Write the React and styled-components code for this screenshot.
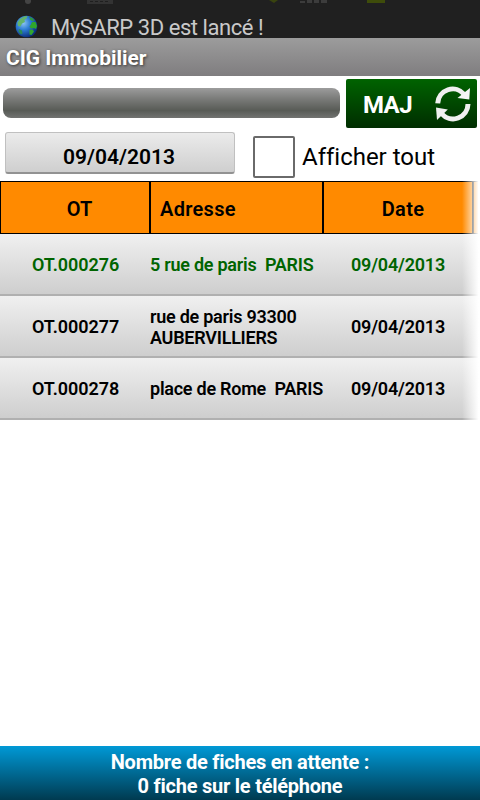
import styled, { createGlobalStyle } from 'styled-components';

const GlobalStyle = createGlobalStyle`
  * {
    box-sizing: border-box;
  }

  body {
    margin: 0;
    background: #fff;
    font-family: Roboto, 'Liberation Sans', sans-serif;
  }
`;

const Screen = styled.div`
  display: flex;
  flex-direction: column;
  width: 480px;
  height: 800px;
  overflow: hidden;
  background: #fff;
  color: #000;
`;

const StatusBar = styled.div`
  position: relative;
  display: flex;
  align-items: center;
  gap: 12px;
  flex: none;
  height: 38px;
  padding: 16px 0 0 15px;
  background: #202020;
  color: #c9c9c9;
  font-size: 22px;
  letter-spacing: -0.45px;
  line-height: 24px;
  white-space: nowrap;
`;

const StatusText = styled.span`
  padding-top: 2px;
`;

const OldIcons = styled.svg`
  position: absolute;
  top: 0;
  left: 0;
`;

const TitleBar = styled.div`
  flex: none;
  height: 38px;
  padding-left: 6px;
  background: linear-gradient(#9c9c9c, #7f7d7f);
  color: #fff;
  font-size: 21px;
  font-weight: 700;
  letter-spacing: -0.06px;
  line-height: 40px;
  text-shadow: 1px 1px 3px #333;
`;

const SyncRow = styled.div`
  display: flex;
  align-items: center;
  justify-content: space-between;
  flex: none;
  height: 55px;
  padding: 0 3px;
`;

const Progress = styled.div`
  width: 337px;
  height: 30px;
  margin-bottom: 1px;
  border-radius: 8px;
  background: linear-gradient(#9c9c9c, #7b7c7a 35%, #585b56 75%, #727371);
`;

const SyncButton = styled.button`
  display: flex;
  align-items: center;
  justify-content: space-between;
  width: 131px;
  height: 49px;
  padding: 0 6px 0 17px;
  border: none;
  border-radius: 2px;
  background: linear-gradient(#006300, #002d00);
  color: #fff;
  font-family: inherit;
  font-size: 24px;
  font-weight: 700;
  letter-spacing: -0.6px;
`;

const SyncText = styled.span`
  padding-top: 2px;
`;

const FilterRow = styled.div`
  display: flex;
  flex: none;
  height: 50px;
  padding: 1px 0 0 5px;
`;

const DateButton = styled.button`
  width: 230px;
  height: 42px;
  padding: 8px 2px 0 0;
  border: 1px solid #c0c0c0;
  border-bottom: 2px solid #929292;
  border-radius: 3px;
  background: linear-gradient(#ebebeb, #cfcfcf);
  color: #000;
  font-family: inherit;
  font-size: 21px;
  font-weight: 600;
`;

const CheckLabel = styled.label`
  display: flex;
  align-items: center;
  gap: 7px;
  height: 42px;
  margin: 4px 0 0 18px;
  font-size: 24px;
  letter-spacing: -0.01px;
`;

const CheckBox = styled.span`
  width: 42px;
  height: 42px;
  border: 2px solid #6a6a6a;
  border-radius: 2px;
  background: #fff;
`;

const Table = styled.div`
  position: relative;
  flex: 1;
`;

const EdgeFade = styled.div`
  position: absolute;
  top: 0;
  right: 0;
  bottom: 0;
  width: 18px;
  background: linear-gradient(to right, rgba(255, 255, 255, 0), #fff 92%);
`;

const HeaderRow = styled.div`
  display: grid;
  grid-template-columns: 150px 173px 150px 7px;
  height: 53px;
  border: 1px solid #000;
  border-width: 1px 0;
  background: #ff8a00;
  font-size: 20px;
  font-weight: 600;
`;

const HeaderCell = styled.div`
  display: flex;
  align-items: center;
  justify-content: ${({ $start }) => ($start ? 'flex-start' : 'center')};
  padding: 2px 0 0 ${({ $pad }) => $pad || 0}px;
  border-right: 1px solid #000;
  box-shadow: inset 1px 0 #000;
  letter-spacing: ${({ $spacing }) => $spacing || 0}px;

  &:last-child {
    border-right: none;
  }
`;

const Row = styled.div`
  display: grid;
  grid-template-columns: 150px 173px 157px;
  align-items: center;
  height: 62px;
  border-bottom: 2px solid #b0b0b0;
  background: linear-gradient(#f0f0f0, #cecece);
  color: ${({ $done }) => ($done ? '#006400' : '#000')};
  font-size: 18px;
  font-weight: 600;
  line-height: 21px;
`;

const Cell = styled.div`
  padding: 1px 0 0 ${({ $pad }) => $pad || 0}px;
  letter-spacing: ${({ $spacing }) => $spacing || 0}px;
  white-space: pre;
`;

const Footer = styled.div`
  flex: none;
  height: 54px;
  padding-top: 4px;
  background: linear-gradient(#0099d6, #003a50);
  color: #fff;
  font-size: 20px;
  font-weight: 700;
  letter-spacing: -0.24px;
  line-height: 24px;
  text-align: center;
  white-space: pre-line;
`;

const Globe = () => (
  <svg width="24" height="24" viewBox="0 0 24 24">
    <defs>
      <radialGradient id="sea" cx="0.36" cy="0.34" r="0.68">
        <stop offset="0" stopColor="#8cc4f2" />
        <stop offset="0.45" stopColor="#2f7fd6" />
        <stop offset="1" stopColor="#0b2f7d" />
      </radialGradient>
    </defs>
    <circle cx="11.500" cy="11.500" r="10.800" fill="url(#sea)" />
    <path d="M2.500 7.500L5 4l4-2.500 3.500-.5-1 2.500-2 1.500.5 2-3 1.500-1.500 3-2.500-.5z" fill="#63b36a" />
    <path d="M14 2l3 1 2.500 2.500-2 .5-2-1z" fill="#2f9a35" />
    <path d="M17 7l3.500 0 1.500 4-1 3-2-1-3 .5-1.500-2 1.500-2z" fill="#2fa52b" />
    <path d="M14.500 15l3-.5 1.500 2-2.500 3.500-2-.5z" fill="#32a530" />
    <path d="M4 14l3 1.500.5 3-1.500 1-2.500-3z" fill="#2b8b55" />
  </svg>
);

const SyncIcon = () => (
  <svg width="36" height="36" viewBox="0 0 36 36" fill="none">
    <g stroke="#f0f0f0" strokeWidth="5">
      <path d="M2.700 17.300A15 15 0 0 1 29.300 8.500" />
      <path d="M33 18A15 15 0 0 1 6.500 27.500" />
    </g>
    <path d="M35 2l-.7 11.500L22.500 12z" fill="#f6f6f6" />
    <path d="M1 21.500L12.800 23.500 2 34z" fill="#f0f0f0" />
  </svg>
);

const rows = [
  { ot: 'OT.000276', adresse: '5 rue de paris  PARIS', date: '09/04/2013', done: true },
  { ot: 'OT.000277', adresse: 'rue de paris 93300\nAUBERVILLIERS', date: '09/04/2013' },
  { ot: 'OT.000278', adresse: 'place de Rome  PARIS', date: '09/04/2013' },
];

export default function App() {
  return (
    <>
      <GlobalStyle />
      <Screen>
        <StatusBar>
          <OldIcons width="480" height="6">
            <circle cx="28" cy="1" r="3" fill="#444" />
            <path d="M87 0h26v4H87z" fill="#333" />
            <path d="M90 1h3v1h-3zM95 1h3v1h-3zM100 1h3v1h-3zM105 1h3v1h-3z" fill="#1f1f1f" />
            <path d="M269 0h9l-4 3z" fill="#39430f" />
            <path d="M300 1h5v2h-5zM307 0h5v3h-5zM314 0h5v3h-5zM321 0h6v3h-6z" fill="#3c3c3c" />
            <path d="M367 0h18v3h-18z" fill="#3e4c0a" />
          </OldIcons>
          <Globe />
          <StatusText>MySARP 3D est lancé !</StatusText>
        </StatusBar>
        <TitleBar>CIG Immobilier</TitleBar>
        <SyncRow>
          <Progress />
          <SyncButton>
            <SyncText>MAJ</SyncText>
            <SyncIcon />
          </SyncButton>
        </SyncRow>
        <FilterRow>
          <DateButton>09/04/2013</DateButton>
          <CheckLabel>
            <CheckBox />
            Afficher tout
          </CheckLabel>
        </FilterRow>
        <Table>
          <HeaderRow>
            <HeaderCell $pad={10}>OT</HeaderCell>
            <HeaderCell $start $pad={10} $spacing={0.3}>Adresse</HeaderCell>
            <HeaderCell $pad={11} $spacing={0.3}>Date</HeaderCell>
            <HeaderCell />
          </HeaderRow>
          {rows.map((row) => (
            <Row key={row.ot} $done={row.done}>
              <Cell $pad={32} $spacing={-0.05}>{row.ot}</Cell>
              <Cell $spacing={-0.25}>{row.adresse}</Cell>
              <Cell $pad={28} $spacing={-0.2}>{row.date}</Cell>
            </Row>
          ))}
          <EdgeFade />
        </Table>
        <Footer>{'Nombre de fiches en attente :\n0 fiche sur le téléphone'}</Footer>
      </Screen>
    </>
  );
}
